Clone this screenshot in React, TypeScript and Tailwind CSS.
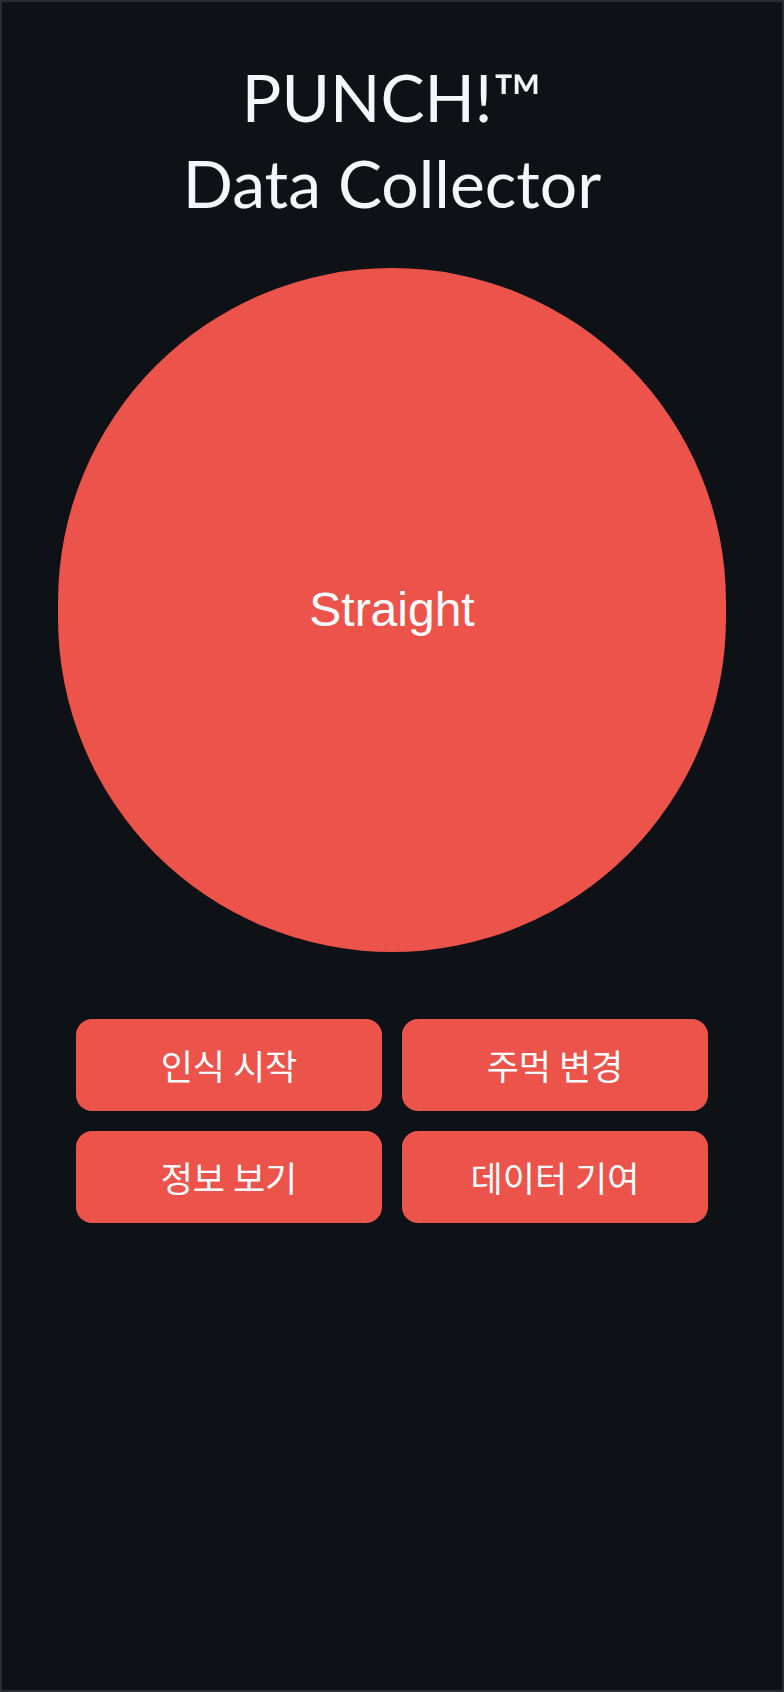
export default function App() {
  const buttons = ['인식 시작', '주먹 변경', '정보 보기', '데이터 기여']

  return (
    <div className="w-[784px] h-[1692px] bg-[#0e1116] border-2 border-[#2b2d31] flex flex-col items-center">
      {/* Title */}
      <h1 className="mt-[52px] text-center text-[#f3f6fa] text-[66px] leading-[86px] font-normal font-['Lato','Noto_Sans',sans-serif]">
        PUNCH!™
        <br />
        Data Collector
      </h1>

      {/* Big punch target */}
      <div className="mt-[42px] w-[668px] h-[684px] rounded-full bg-[#eb534b] flex items-center justify-center shrink-0">
        <span className="text-white text-[48px] font-['Liberation_Sans',Arial,sans-serif]">Straight</span>
      </div>

      {/* Actions */}
      <div className="mt-[67px] grid grid-cols-2 gap-5 w-[632px]">
        {buttons.map((b) => (
          <button
            key={b}
            className="h-[92px] rounded-2xl bg-[#eb534b] text-white text-[35px] font-['Noto_Sans_CJK_KR',sans-serif]"
          >
            {b}
          </button>
        ))}
      </div>
    </div>
  )
}
